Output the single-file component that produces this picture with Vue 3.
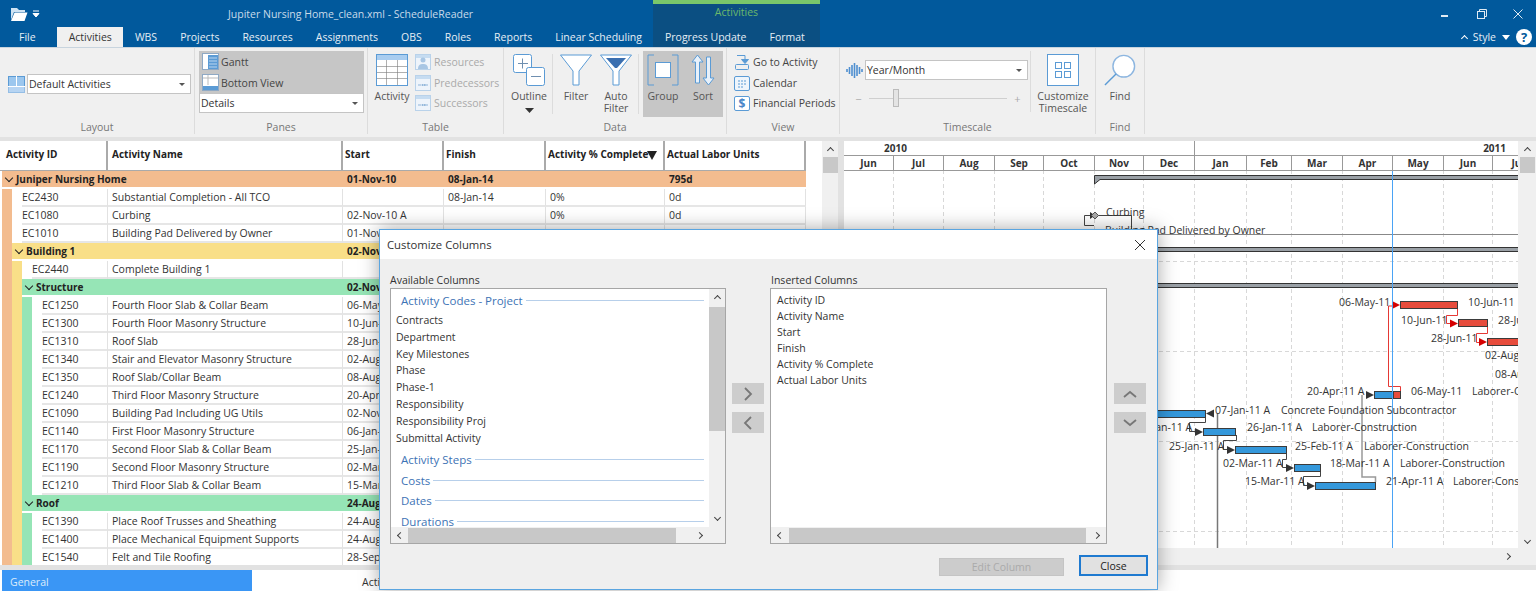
<template>
  <div class="app">
    <header class="titlebar">
      <div class="context"><span>Activities</span></div>
      <div class="title-row">
        <div class="quick">
          <svg width="18" height="16" viewBox="0 0 18 16"><path d="M1 2h6l2 2h6v2H4L1 14z" fill="#cfe3f3"/><path d="M4.500 6.500H17.500L14.500 15H1z" fill="#fff"/></svg>
          <svg class="quick-drop" width="8" height="8" viewBox="0 0 8 8"><path d="M1 1h6M1 3.500h6L4 7z" stroke="#fff" fill="#fff" stroke-width="1"/></svg>
        </div>
        <span class="title">Jupiter Nursing Home_clean.xml - ScheduleReader</span>
        <div class="win">
          <span class="win-min"></span>
          <svg width="12" height="12" viewBox="0 0 12 12" fill="none" stroke="#dfeaf3"><rect x="1.500" y="3.500" width="7" height="7"/><path d="M3.500 3.500v-2h7v7h-2"/></svg>
          <svg width="12" height="12" viewBox="0 0 12 12" stroke="#dfeaf3"><path d="M1.500 1.500l9 9M10.500 1.500l-9 9"/></svg>
        </div>
      </div>
      <nav class="tabs">
        <span v-for="t in tabs" :key="t" :class="['tab', { active: t === 'Activities', file: t === 'File' }]">{{ t }}</span>
        <div class="style-box">
          <span class="chev chev-up small"></span>
          <span>Style</span>
          <svg width="8" height="5" viewBox="0 0 8 5"><path d="M0 0h8L4 5z" fill="#fff"/></svg>
          <span class="help">?</span>
        </div>
      </nav>
    </header>

    <section class="ribbon">
      <div class="group" style="width: 195px">
        <div class="group-body layout-body">
          <svg width="17" height="17" viewBox="0 0 17 17"><rect x="0.500" y="0.500" width="16" height="16" fill="#9cc7ee" stroke="#5b9bd5"/><path d="M0 10.500h17M8.500 0v10.500" stroke="#fff"/><path d="M0 11h17v6H0z" fill="#cfe2f5" opacity=".5"/></svg>
          <div class="combo layout-combo"><span>Default Activities</span><i class="drop"></i></div>
        </div>
        <div class="group-label">Layout</div>
      </div>

      <div class="group" style="width: 173px">
        <div class="group-body panes-body">
          <div class="panes-on">
            <div class="pane-row">
              <svg width="17" height="17" viewBox="0 0 17 17"><rect x="0.500" y="0.500" width="16" height="16" fill="#fff" stroke="#8fa9c4"/><rect x="6" y="2" width="10" height="14" fill="#5b9bd5"/><path d="M7 5h8M7 8h8M7 11h8M7 14h8" stroke="#bcd6ef"/></svg>
              <span>Gantt</span>
            </div>
            <div class="pane-row">
              <svg width="17" height="17" viewBox="0 0 17 17"><rect x="0.500" y="0.500" width="16" height="16" fill="#fff" stroke="#8fa9c4"/><rect x="1" y="12" width="15" height="4" fill="#5b9bd5"/><path d="M6 1v10M1 4h15" stroke="#bbb"/></svg>
              <span>Bottom View</span>
            </div>
          </div>
          <div class="combo panes-combo"><span>Details</span><i class="drop"></i></div>
        </div>
        <div class="group-label">Panes</div>
      </div>

      <div class="group" style="width: 136px">
        <div class="group-body table-body">
          <div class="big" style="width: 38px">
            <svg width="32" height="32" viewBox="0 0 32 32"><rect x="0.500" y="0.500" width="31" height="31" fill="#fff" stroke="#5b9bd5"/><rect x="1" y="1" width="30" height="5" fill="#a9cdf0"/><path d="M1 12.500h30M1 18.500h30M1 24.500h30M10.500 6v25M21.500 6v25" stroke="#7b7b7b" stroke-opacity=".6"/></svg>
            <span>Activity</span>
          </div>
          <div class="small-list disabled">
            <div v-for="s in tableLinks" :key="s.name" class="small-row">
              <svg width="16" height="16" viewBox="0 0 16 16"><rect x="0.500" y="0.500" width="15" height="15" fill="#eef4fb" stroke="#b9d2ea"/><rect x="1" y="1" width="14" height="3" fill="#c6dcf1"/><circle v-if="s.person" cx="8" cy="6" r="2.500" fill="#a8c6e4"/><path v-if="s.person" d="M3 15c0-4 2-5 5-5s5 1 5 5z" fill="#a8c6e4"/><path v-if="!s.person" d="M3 10h3M10 10h3" stroke="#8fb4d9"/><circle v-if="!s.person" cx="7.500" cy="10" r="1" fill="#8fb4d9"/><circle v-if="!s.person" cx="9.500" cy="10" r="1" fill="#8fb4d9"/></svg>
              <span>{{ s.name }}</span>
            </div>
          </div>
        </div>
        <div class="group-label">Table</div>
      </div>

      <div class="group" style="width: 223px">
        <div class="group-body data-body">
          <div class="big outline-btn">
            <svg width="32" height="32" viewBox="0 0 32 32" fill="none" stroke="#5b9bd5"><rect x="0.500" y="0.500" width="18" height="18" rx="2" fill="#fff"/><rect x="13.500" y="13.500" width="18" height="18" rx="2" fill="#fff"/><path d="M5 9.500h10M9.500 4.500v10" stroke="#6f8fb0"/><path d="M18 22.500h10" stroke="#6f8fb0"/></svg>
            <span>Outline</span>
            <svg class="outline-arrow" width="9" height="5" viewBox="0 0 9 5"><path d="M0 0h9L4.500 5z" fill="#333"/></svg>
          </div>
          <div class="big" style="width: 40px">
            <svg width="32" height="32" viewBox="0 0 32 32"><path d="M0.500 1h31L19 17v14h-6V17z" fill="#fff" stroke="#5b9bd5"/></svg>
            <span>Filter</span>
          </div>
          <div class="big" style="width: 40px">
            <svg width="32" height="32" viewBox="0 0 32 32"><path d="M0.500 1h31L19 17v14h-6V17z" fill="#fff" stroke="#5b9bd5"/><path d="M6 4h20L17 14h-2z" fill="#3a6fb0"/></svg>
            <span>Auto<br>Filter</span>
          </div>
          <i class="vsep"></i>
          <div class="data-on">
            <div class="big" style="width: 40px">
              <svg width="32" height="32" viewBox="0 0 32 32" fill="none" stroke="#5b9bd5"><path d="M7 1H1v30h6M25 1h6v30h-6"/><rect x="8.500" y="8.500" width="15" height="15" fill="#fff"/></svg>
              <span>Group</span>
            </div>
            <div class="big" style="width: 40px">
              <svg width="24" height="32" viewBox="0 0 24 32" fill="#e8f1fa" stroke="#5b9bd5"><path d="M6.500 1L1 8h3.500v21h4V8H12z"/><path d="M17.500 31L12 24h3.500V3h4v21H23z"/></svg>
              <span>Sort</span>
            </div>
          </div>
        </div>
        <div class="group-label">Data</div>
      </div>

      <div class="group" style="width: 113px">
        <div class="group-body view-body">
          <div class="small-row">
            <svg width="16" height="16" viewBox="0 0 16 16" fill="none" stroke="#5b9bd5"><path d="M3 1.500h8v6"/><path d="M7.500 5.500l3.500 4 3.500-4z" fill="#5b9bd5"/><rect x="1.500" y="10.500" width="13" height="5" rx="1"/></svg>
            <span>Go to Activity</span>
          </div>
          <div class="small-row">
            <svg width="16" height="16" viewBox="0 0 16 16" fill="#eef5fc" stroke="#5b9bd5"><rect x="0.500" y="1.500" width="15" height="14" rx="1.500"/><path d="M4 6h2M7 6h2M10 6h2M4 9h2M7 9h2M10 9h2M4 12h2M7 12h2" stroke="#5b9bd5"/></svg>
            <span>Calendar</span>
          </div>
          <div class="small-row">
            <svg width="16" height="16" viewBox="0 0 16 16"><rect x="0.500" y="1.500" width="15" height="14" rx="1.500" fill="#fff" stroke="#5b9bd5"/><text x="8" y="13" text-anchor="middle" class="dollar">$</text></svg>
            <span>Financial Periods</span>
          </div>
        </div>
        <div class="group-label">View</div>
      </div>

      <div class="group" style="width: 256px">
        <div class="group-body time-body">
          <div class="time-left">
            <div class="time-row">
              <svg width="17" height="17" viewBox="0 0 17 17" stroke="#4f8fd0" stroke-width="1.600"><path d="M1 7v3M3.500 5v7M6 3v11M8.500 1v15M11 3v11M13.500 5v7M16 7v3"/></svg>
              <div class="combo time-combo"><span>Year/Month</span><i class="drop"></i></div>
            </div>
            <div class="slider">
              <span class="slide-sign">−</span>
              <div class="track"><i class="thumb"></i></div>
              <span class="slide-sign">+</span>
            </div>
          </div>
          <div class="big customize">
            <svg width="32" height="32" viewBox="0 0 32 32" fill="none" stroke="#5b9bd5"><rect x="0.500" y="0.500" width="31" height="31" fill="#fff"/><rect x="8.500" y="8.500" width="6" height="6"/><rect x="17.500" y="8.500" width="6" height="6"/><rect x="8.500" y="17.500" width="6" height="6"/><rect x="17.500" y="17.500" width="6" height="6"/></svg>
            <span>Customize<br>Timescale</span>
          </div>
        </div>
        <div class="group-label">Timescale</div>
      </div>

      <div class="group" style="width: 49px">
        <div class="group-body find-body">
          <div class="big" style="width: 48px">
            <svg width="34" height="34" viewBox="0 0 34 34" fill="none"><circle cx="21" cy="13" r="11.500" fill="#fff" stroke="#8db6e0" stroke-width="1.500"/><path d="M13 21L1 33" stroke="#5b9bd5" stroke-width="1.500"/></svg>
            <span>Find</span>
          </div>
        </div>
        <div class="group-label">Find</div>
      </div>
    </section>

    <main class="panes">
      <div class="grid-pane">
        <div class="grid">
          <div class="row head">
            <div v-for="h in columns" :key="h" class="cell">
              {{ h }}
              <svg v-if="h === 'Activity % Complete'" class="sort-mark" width="10" height="9" viewBox="0 0 10 9"><path d="M0 0h10L5 9z" fill="#222"/></svg>
            </div>
          </div>
          <div v-for="r in rows" :key="r.id || r.name" :class="['row', r.group ? `is-group group-${r.group}` : 'leaf']">
            <div :class="['cell', 'id-cell', { span2: r.group }]">
              <i v-for="(b, i) in r.bands" :key="i" :class="['band', `band-${b}`]"></i>
              <div v-if="r.group" class="group-fill">
                <span class="chev chev-down"></span>
                <span>{{ r.name }}</span>
              </div>
              <span v-else class="id-text">{{ r.id }}</span>
            </div>
            <div v-if="!r.group" class="cell">{{ r.name }}</div>
            <div class="cell">{{ r.start }}</div>
            <div class="cell">{{ r.finish }}</div>
            <div class="cell">{{ r.pct }}</div>
            <div class="cell">{{ r.labor }}</div>
          </div>
        </div>
        <div class="vscroll grid-scroll">
          <span class="chev chev-up"></span>
          <i class="vthumb"></i>
        </div>
      </div>

      <div class="gantt-pane">
        <div class="gantt-main">
          <div class="years">
            <div class="year year-left"><span>2010</span></div>
            <div class="year year-right"><span>2011</span></div>
          </div>
          <div class="months">
            <div v-for="(m, i) in months" :key="i" class="month" :style="{ width: m.w + 'px' }">{{ m.name }}</div>
          </div>
          <svg class="chart" width="674" height="377" viewBox="844 171 674 377">
            <g class="grid-lines">
              <path v-for="x in monthLines" :key="x" :d="`M${x + 0.5} 170V548`" />
              <path v-for="y in [261, 351, 441, 531]" :key="y" :d="`M844 ${y + 0.5}H1518`" />
            </g>
            <path d="M1094.500 175.500H1519V179.500H1100L1094.500 184Z" fill="#9aa0a6" stroke="#333"/>
            <rect x="1094.500" y="247.500" width="425" height="4" fill="#9aa0a6" stroke="#333"/>
            <rect x="1094.500" y="283.500" width="425" height="4" fill="#9aa0a6" stroke="#333"/>
            <path d="M1100 234.500H1518" stroke="#888"/>
            <path d="M1094 215.500H1084.500V225.500H1094M1094 215.500H1131.500V232" fill="none" stroke="#444"/>
            <path d="M1090 212l5 3.500-5 3.500z" fill="#333"/>
            <path d="M1095 212l3.500 3.500-3.500 3.500-3.500-3.500z" fill="#aaa" stroke="#555"/>

            <path d="M1217.500 413V548" stroke="#777" stroke-width="1.500"/>
            <path d="M1362 395V477H1375.500V482" fill="none" stroke="#999" stroke-width="1.500"/>
            <path v-for="(c, i) in blackLinks" :key="i" :d="c" fill="none" stroke="#444"/>
            <path v-for="(c, i) in redLinks" :key="'r' + i" :d="c" fill="none" stroke="#e53935"/>

            <rect v-for="(b, i) in bars" :key="'b' + i" :x="b.x + 0.5" :y="b.y + 0.5" :width="b.w" height="7" :fill="b.red ? '#e74c3c' : '#3498db'" stroke="#3b3b3b"/>
            <path v-for="(a, i) in arrows" :key="'a' + i" :d="a.d" :fill="a.red ? '#d50000' : '#333'"/>
            <path d="M1392.500 170V548" stroke="#4aa3f5"/>
            <text v-for="(l, i) in labels" :key="'t' + i" :x="l[0]" :y="l[1]" class="bar-label">{{ l[2] }}</text>
          </svg>
          <div class="hscroll gantt-h"><span class="chev chev-right"></span></div>
        </div>
        <div class="vscroll gantt-scroll">
          <span class="chev chev-up"></span>
          <i class="vthumb"></i>
          <span class="chev chev-down scroll-end"></span>
        </div>
      </div>
    </main>

    <footer class="bottom">
      <div class="bottom-tab">General</div>
      <div class="bottom-text">Activity Details</div>
    </footer>

    <div class="dialog">
      <div class="dlg-title">
        <span>Customize Columns</span>
        <svg width="12" height="12" viewBox="0 0 12 12" stroke="#333"><path d="M1 1l10 10M11 1L1 11"/></svg>
      </div>
      <div class="dlg-body">
        <div class="dlg-cols">
          <div class="col-left">
            <div class="col-label">Available Columns</div>
            <div class="listbox avail">
              <div class="list-content">
                <template v-for="s in available" :key="s.title">
                  <div :class="['sect', { 'sect-first': s.items.length }]"><span>{{ s.title }}</span><i></i></div>
                  <div v-for="it in s.items" :key="it" class="avail-item">{{ it }}</div>
                </template>
              </div>
              <div class="list-v">
                <span class="chev chev-up"></span>
                <i class="list-thumb"></i>
                <span class="chev chev-down list-down"></span>
              </div>
              <div class="list-h">
                <span class="chev chev-left"></span>
                <i class="h-thumb"></i>
                <span class="chev chev-right"></span>
              </div>
              <div class="corner"></div>
            </div>
          </div>
          <div class="move-btns">
            <button class="sq"><svg width="14" height="14" viewBox="0 0 14 14" class="sq-icon"><path d="M4 1l6 6-6 6"/></svg></button>
            <button class="sq"><svg width="14" height="14" viewBox="0 0 14 14" class="sq-icon"><path d="M10 1L4 7l6 6"/></svg></button>
          </div>
          <div class="col-right">
            <div class="col-label ins-label">Inserted Columns</div>
            <div class="listbox inserted">
              <div class="list-content ins-content">
                <div v-for="c in columns" :key="c" class="ins-item">{{ c }}</div>
              </div>
              <div class="list-h ins-h">
                <span class="chev chev-left"></span>
                <i class="h-thumb"></i>
                <span class="chev chev-right"></span>
              </div>
            </div>
          </div>
          <div class="move-btns order">
            <button class="sq"><svg width="14" height="14" viewBox="0 0 14 14" class="sq-icon"><path d="M1 10l6-5 6 5"/></svg></button>
            <button class="sq"><svg width="14" height="14" viewBox="0 0 14 14" class="sq-icon"><path d="M1 4l6 5 6-5"/></svg></button>
          </div>
        </div>
        <div class="dlg-foot">
          <button class="btn-edit">Edit Column</button>
          <button class="btn-close">Close</button>
        </div>
      </div>
    </div>
  </div>
</template>

<script setup>
const tabs = ['File', 'Activities', 'WBS', 'Projects', 'Resources', 'Assignments', 'OBS', 'Roles', 'Reports', 'Linear Scheduling', 'Progress Update', 'Format']

const tableLinks = [
  { name: 'Resources', person: true },
  { name: 'Predecessors' },
  { name: 'Successors' }
]

const columns = ['Activity ID', 'Activity Name', 'Start', 'Finish', 'Activity % Complete', 'Actual Labor Units']

const leaf1 = ['o']
const leaf2 = ['o', 'y']
const leaf3 = ['o', 'y', 'g']

const rows = [
  { group: 'o', bands: [], name: 'Juniper Nursing Home', start: '01-Nov-10', finish: '08-Jan-14', labor: '795d' },
  { id: 'EC2430', bands: leaf1, name: 'Substantial Completion - All TCO', finish: '08-Jan-14', pct: '0%', labor: '0d' },
  { id: 'EC1080', bands: leaf1, name: 'Curbing', start: '02-Nov-10 A', pct: '0%', labor: '0d' },
  { id: 'EC1010', bands: leaf1, name: 'Building Pad Delivered by Owner', start: '01-Nov-10' },
  { group: 'y', bands: leaf1, name: 'Building 1', start: '02-Nov-10' },
  { id: 'EC2440', bands: leaf2, name: 'Complete Building 1' },
  { group: 'g', bands: leaf2, name: 'Structure', start: '02-Nov-10' },
  { id: 'EC1250', bands: leaf3, name: 'Fourth Floor Slab & Collar Beam', start: '06-May-11' },
  { id: 'EC1300', bands: leaf3, name: 'Fourth Floor Masonry Structure', start: '10-Jun-11' },
  { id: 'EC1310', bands: leaf3, name: 'Roof Slab', start: '28-Jun-11' },
  { id: 'EC1340', bands: leaf3, name: 'Stair and Elevator Masonry Structure', start: '02-Aug-11' },
  { id: 'EC1350', bands: leaf3, name: 'Roof Slab/Collar Beam', start: '08-Aug-11' },
  { id: 'EC1240', bands: leaf3, name: 'Third Floor Masonry Structure', start: '20-Apr-11 A' },
  { id: 'EC1090', bands: leaf3, name: 'Building Pad Including UG Utils', start: '02-Nov-10 A' },
  { id: 'EC1140', bands: leaf3, name: 'First Floor Masonry Structure', start: '06-Jan-11 A' },
  { id: 'EC1170', bands: leaf3, name: 'Second Floor Slab & Collar Beam', start: '25-Jan-11 A' },
  { id: 'EC1190', bands: leaf3, name: 'Second Floor Masonry Structure', start: '02-Mar-11 A' },
  { id: 'EC1210', bands: leaf3, name: 'Third Floor Slab & Collar Beam', start: '15-Mar-11 A' },
  { group: 'g', bands: leaf2, name: 'Roof', start: '24-Aug-11' },
  { id: 'EC1390', bands: leaf3, name: 'Place Roof Trusses and Sheathing', start: '24-Aug-11' },
  { id: 'EC1400', bands: leaf3, name: 'Place Mechanical Equipment Supports', start: '24-Aug-11' },
  { id: 'EC1540', bands: leaf3, name: 'Felt and Tile Roofing', start: '28-Sep-11' }
]

const months = [
  { name: 'Jun', w: 50 }, { name: 'Jul', w: 50 }, { name: 'Aug', w: 51 }, { name: 'Sep', w: 49 },
  { name: 'Oct', w: 51 }, { name: 'Nov', w: 49 }, { name: 'Dec', w: 51 }, { name: 'Jan', w: 52 },
  { name: 'Feb', w: 45 }, { name: 'Mar', w: 51 }, { name: 'Apr', w: 50 }, { name: 'May', w: 51 },
  { name: 'Jun', w: 49 }, { name: 'Jul', w: 50 }
]

const monthLines = [893, 943, 994, 1043, 1094, 1143, 1194, 1246, 1291, 1342, 1392, 1443, 1492]

const bars = [
  { x: 1400, y: 301, w: 57, red: true },
  { x: 1458, y: 319, w: 29, red: true },
  { x: 1487, y: 338, w: 32, red: true },
  { x: 1374, y: 391, w: 18 },
  { x: 1393, y: 391, w: 7, red: true },
  { x: 1150, y: 410, w: 55 },
  { x: 1203, y: 428, w: 32 },
  { x: 1235, y: 446, w: 51 },
  { x: 1294, y: 464, w: 26 },
  { x: 1315, y: 482, w: 60 }
]

const arrows = [
  { d: 'M1392 301l8 4-8 4z', red: true },
  { d: 'M1450 319.500l8 4-8 4z', red: true },
  { d: 'M1479 338l8 4-8 4z', red: true },
  { d: 'M1366 391l8 4-8 4z' },
  { d: 'M1214 409.500l-8 4 8 4z' },
  { d: 'M1195 428l8 4-8 4z' },
  { d: 'M1227 446l8 4-8 4z' },
  { d: 'M1286 464l8 4-8 4z' },
  { d: 'M1307 482l8 4-8 4z' }
]

const blackLinks = [
  'M1205.500 417V422.500H1189.500V431.500H1196',
  'M1236.500 435V440.500H1223.500V449.500H1228',
  'M1286.500 453V459.500H1282.500V467.500H1287',
  'M1320.500 471V476.500H1303.500V485.500H1308'
]

const redLinks = [
  'M1388.500 306H1392M1388.500 306V386.500H1400.500V393',
  'M1457.500 309V315.500H1446.500V323.500H1450',
  'M1487.500 327V333.500H1476.500V342.500H1480'
]

const labels = [
  [1106, 216, 'Curbing'],
  [1105, 234, 'Building Pad Delivered by Owner'],
  [1339, 306, '06-May-11'], [1468, 306, '10-Jun-11'],
  [1401, 324, '10-Jun-11'], [1498, 324, '28-Jun-11'],
  [1431, 342, '28-Jun-11'],
  [1485, 359, '02-Aug-11'],
  [1495, 378, '08-Aug-11'],
  [1307, 395, '20-Apr-11 A'], [1411, 395, '06-May-11'], [1472, 395, 'Laborer-Construction'],
  [1215, 414, '07-Jan-11 A'], [1281, 414, 'Concrete Foundation Subcontractor'],
  [1137, 431, '06-Jan-11 A'], [1247, 431, '26-Jan-11 A'], [1312, 431, 'Laborer-Construction'],
  [1169, 450, '25-Jan-11 A'], [1295, 450, '25-Feb-11 A'], [1364, 450, 'Laborer-Construction'],
  [1223, 467, '02-Mar-11 A'], [1330, 467, '18-Mar-11 A'], [1400, 467, 'Laborer-Construction'],
  [1245, 485, '15-Mar-11 A'], [1386, 485, '21-Apr-11 A'], [1453, 485, 'Laborer-Construction']
]

const available = [
  {
    title: 'Activity Codes - Project',
    items: ['Contracts', 'Department', 'Key Milestones', 'Phase', 'Phase-1', 'Responsibility', 'Responsibility Proj', 'Submittal Activity']
  },
  { title: 'Activity Steps', items: [] },
  { title: 'Costs', items: [] },
  { title: 'Dates', items: [] },
  { title: 'Durations', items: [] }
]
</script>

<style>
html, body {
  margin: 0;
  overflow: hidden;
}
</style>

<style scoped>
.app {
  position: relative;
  width: 1536px;
  height: 591px;
  overflow: hidden;
  background: #f0f0f0;
  font-family: "Open Sans", "Noto Sans", sans-serif;
  font-size: 10.5px;
  color: #333;
}

/* title bar */
.titlebar {
  position: relative;
  height: 47px;
  background: #01599c;
  color: #e6eef5;
}
.context {
  position: absolute;
  left: 653px;
  top: 0;
  width: 167px;
  height: 47px;
  box-sizing: border-box;
  background: #0b4f82;
  border-top: 4px solid #7ac76a;
  text-align: center;
  color: #6cb86c;
  line-height: 16px;
}
.title-row {
  position: relative;
  height: 27px;
  display: flex;
  align-items: center;
}
.quick {
  width: 228px;
  padding-left: 10px;
  box-sizing: border-box;
  display: flex;
  align-items: center;
  gap: 4px;
}
.title {
  color: #c9dbea;
  font-size: 10.5px;
}
.win {
  margin-left: auto;
  margin-right: 12px;
  display: flex;
  align-items: center;
  gap: 24px;
}
.win-min {
  width: 7px;
  height: 2px;
  background: #dfeaf3;
  margin-top: 5px;
  margin-right: 4px;
}
.tabs {
  position: relative;
  height: 20px;
  display: flex;
  padding-left: 7.500px;
}
.tab {
  padding: 0 11.500px;
  line-height: 20px;
  white-space: nowrap;
}
.tab.file {
  margin-right: 10px;
}
.tab.active {
  background: #f0f0f0;
  color: #333;
}
.style-box {
  margin-left: auto;
  margin-right: 4px;
  display: flex;
  align-items: center;
  gap: 6px;
}
.help {
  width: 16px;
  height: 16px;
  border-radius: 50%;
  background: #fff;
  color: #01599c;
  font-weight: 700;
  font-size: 13px;
  line-height: 16px;
  text-align: center;
}

/* shared chevrons drawn with two borders */
.chev {
  display: inline-block;
  width: 5px;
  height: 5px;
  border-top: 1.5px solid #444;
  border-left: 1.5px solid #444;
  box-sizing: border-box;
}
.chev-up { transform: rotate(45deg); }
.chev-down { transform: rotate(225deg); }
.chev-left { transform: rotate(-45deg); }
.chev-right { transform: rotate(135deg); }
.small {
  border-color: #fff;
  margin-top: 3px;
}

/* ribbon */
.ribbon {
  height: 90px;
  display: flex;
  box-sizing: border-box;
  border-top: 1px solid #c8d4de;
  background: #f0f0f0;
}
.group {
  display: flex;
  flex-direction: column;
  box-sizing: border-box;
  border-right: 1px solid #dcdcdc;
  margin-bottom: 3px;
  flex: none;
}
.group-body {
  height: 69px;
  padding-top: 3px;
  display: flex;
}
.group-label {
  text-align: center;
  color: #777;
  line-height: 14px;
  margin-top: 1px;
}
.combo {
  display: flex;
  align-items: center;
  justify-content: space-between;
  box-sizing: border-box;
  background: #fff;
  border: 1px solid #c4c4c4;
  padding: 0 5px 0 1px;
}
.drop {
  width: 0;
  height: 0;
  border-left: 3px solid transparent;
  border-right: 3px solid transparent;
  border-top: 3px solid #555;
}
.layout-body {
  align-items: center;
  padding-left: 8px;
  gap: 2px;
  height: 67px;
  padding-bottom: 2px;
}
.layout-combo {
  width: 164px;
  height: 20px;
}
.panes-body {
  flex-direction: column;
  padding-left: 4px;
}
.panes-on {
  width: 165px;
  height: 42px;
  background: #c6c6c6;
  padding: 0 0 0 3px;
  box-sizing: border-box;
}
.pane-row {
  height: 21px;
  display: flex;
  align-items: center;
  gap: 2px;
  color: #444;
}
.panes-combo {
  width: 165px;
  height: 20px;
}
.big {
  display: flex;
  flex-direction: column;
  align-items: center;
  text-align: center;
  line-height: 12px;
  color: #555;
  flex: none;
  margin-top: 3px;
}
.big > svg:first-child {
  height: 32px;
  margin-bottom: 4px;
}
.table-body {
  padding-left: 5px;
}
.small-list {
  margin-left: 4px;
  padding-top: 1px;
}
.small-row {
  height: 20.5px;
  display: flex;
  align-items: center;
  gap: 3px;
  white-space: nowrap;
  color: #444;
}
.disabled .small-row {
  color: #aaa;
}
.data-body {
  padding-left: 2px;
}
.outline-btn {
  width: 46px;
  border-right: 1px solid #dcdcdc;
  height: 60px;
  margin-right: 3px;
}
.outline-arrow {
  margin-top: 6px;
}
.vsep {
  width: 1px;
  height: 60px;
  background: #dcdcdc;
  margin: 3px 4px 0 2px;
}
.data-on {
  display: flex;
  background: #c6c6c6;
  height: 66px;
  width: 80px;
}
.dollar {
  font-size: 12px;
  font-weight: 700;
  fill: #4a86c8;
}
.view-body {
  flex-direction: column;
  padding-left: 7px;
  padding-top: 4px;
  height: 68px;
}
.time-body {
  padding-left: 6px;
}
.time-left {
  width: 184px;
  padding-top: 9px;
  border-right: 1px solid #dcdcdc;
  height: 52px;
}
.time-row {
  display: flex;
  align-items: center;
  gap: 2px;
}
.time-combo {
  width: 163px;
  height: 20px;
}
.slider {
  display: flex;
  align-items: center;
  margin-top: 9px;
  height: 18px;
  color: #aaa;
  padding-left: 4px;
  width: 176px;
}
.slide-sign {
  width: 17px;
  font-size: 11px;
  text-align: center;
}
.track {
  position: relative;
  width: 138px;
  height: 1px;
  background: #cfcfcf;
  margin: 0 2px;
}
.thumb {
  position: absolute;
  left: 24px;
  top: -9px;
  width: 6px;
  height: 18px;
  box-sizing: border-box;
  background: #e4e4e4;
  border: 1px solid #bbb;
}
.customize {
  width: 64px;
}

/* grid + gantt */
.panes {
  height: 433px;
  display: flex;
  background: #e2e2e2;
  padding-top: 4px;
  padding-bottom: 5px;
  box-sizing: border-box;
}
.grid-pane {
  width: 838px;
  display: flex;
  background: #fff;
}
.grid {
  width: 822px;
  overflow: hidden;
}
.row {
  display: grid;
  grid-template-columns: 108px 235px 101px 102px 119px 141px;
  width: 806px;
  height: 18px;
  box-sizing: border-box;
}
.cell {
  display: flex;
  align-items: center;
  white-space: nowrap;
  padding-left: 4px;
  box-sizing: border-box;
  border-right: 1px solid #e2e2e2;
  border-bottom: 2px solid #e6e6e6;
  min-width: 0;
}
.head {
  height: 30px;
  font-weight: 700;
  font-size: 10px;
  color: #222;
}
.head .cell {
  padding-left: 4px;
  padding-bottom: 4px;
  border-right: 2px solid #aaa;
  border-bottom: 1px solid #aaa;
  position: relative;
  background: #fff;
}
.head .cell:first-child {
  padding-left: 6px;
}
.head .cell:nth-child(n+3) {
  padding-left: 2px;
}
.sort-mark {
  position: absolute;
  right: 6px;
  top: 10px;
}
.id-cell {
  padding-left: 2px;
  align-items: stretch;
  border-bottom: none;
}
.band {
  width: 10px;
  flex: none;
  height: 18px;
}
.band-o { background: #f3bc8f; }
.band-y { background: #f9df88; }
.band-g { background: #96e5b6; }
.id-text {
  margin-left: 10px;
  line-height: 16px;
  border-bottom: 2px solid #e6e6e6;
  flex: 1;
}
.is-group {
  font-weight: 700;
  font-size: 10px;
  color: #222;
}
.is-group .cell {
  border-right: none;
  border-bottom: none;
  height: 16px;
}
.is-group .id-cell {
  height: 18px;
  grid-column: span 2;
}
.group-fill {
  flex: 1;
  height: 16px;
  display: flex;
  align-items: center;
  padding-left: 4px;
  gap: 4px;
}
.group-fill .chev {
  width: 6px;
  height: 6px;
  border-color: #222;
  margin-bottom: 3px;
}
.group-o .cell:not(.id-cell), .group-o .group-fill { background: #f3bc8f; }
.group-y .cell:not(.id-cell), .group-y .group-fill { background: #f9df88; }
.group-g .cell:not(.id-cell), .group-g .group-fill { background: #96e5b6; }

.vscroll {
  width: 16px;
  background: #f0f0f0;
  display: flex;
  flex-direction: column;
  align-items: center;
  flex: none;
}
.vscroll .chev {
  margin-top: 7px;
}
.vthumb {
  width: 15px;
  height: 16px;
  background: #c8c8c8;
  margin-top: 4px;
}
.gantt-pane {
  flex: 1;
  display: flex;
  margin-left: 6px;
  background: #fff;
  min-width: 0;
}
.gantt-main {
  width: 674px;
  flex: none;
}
.years {
  height: 14px;
  display: flex;
  font-weight: 700;
  font-size: 10px;
  line-height: 14px;
  background: #fff;
}
.year {
  box-sizing: border-box;
  white-space: nowrap;
}
.year-left {
  width: 351px;
  border-right: 1px solid #999;
  padding-left: 40px;
}
.year-right {
  flex: 1;
  text-align: right;
  padding-right: 12px;
}
.months {
  display: flex;
  height: 14px;
  border-top: 1px solid #999;
  border-bottom: 1px solid #999;
  overflow: hidden;
}
.month {
  flex: none;
  box-sizing: border-box;
  border-right: 1px solid #999;
  text-align: center;
  font-weight: 700;
  font-size: 10px;
  line-height: 14px;
  white-space: nowrap;
}
.month:last-child {
  border-right: none;
}
.chart {
  display: block;
  background: #fff;
}
.grid-lines path {
  stroke: #d8d8d8;
  stroke-dasharray: 4 3;
  fill: none;
}
.bar-label {
  font-size: 10.5px;
  fill: #333;
}
.hscroll {
  height: 17px;
  background: #f0f0f0;
  display: flex;
  align-items: center;
  justify-content: flex-end;
  padding-right: 8px;
}
.gantt-scroll {
  width: 18px;
}
.gantt-scroll .scroll-end {
  margin-top: auto;
  margin-bottom: 22px;
}
.bottom {
  height: 21px;
  display: flex;
  background: #fff;
  padding-left: 2px;
}
.bottom-tab {
  width: 250px;
  background: #3a96f5;
  color: #dcecfb;
  padding-left: 8px;
  box-sizing: border-box;
  line-height: 24px;
}
.bottom-text {
  margin-left: 110px;
  line-height: 24px;
}

/* dialog */
.dialog {
  position: absolute;
  left: 379px;
  top: 229px;
  width: 779px;
  height: 361px;
  box-sizing: border-box;
  border: 1px solid #5aa5e0;
  background: #efefef;
  box-shadow: 0 0 18px rgba(0, 0, 0, 0.35);
  display: flex;
  flex-direction: column;
}
.dlg-title {
  height: 29px;
  background: #fff;
  display: flex;
  align-items: center;
  justify-content: space-between;
  padding: 0 11px 0 7px;
  font-size: 11.3px;
  flex: none;
}
.dlg-body {
  padding: 13px 9px 0 10px;
  flex: 1;
}
.dlg-cols {
  display: flex;
}
.col-label {
  line-height: 16px;
  height: 16px;
}
.ins-label {
  padding-left: 1px;
}
.listbox {
  box-sizing: border-box;
  border: 1px solid #a6a6a6;
  background: #fff;
  height: 256px;
  display: grid;
}
.avail {
  width: 336px;
  grid-template-columns: 1fr 16px;
  grid-template-rows: 238px 1fr;
}
.inserted {
  width: 337px;
  grid-template-rows: 238px 1fr;
}
.list-content {
  overflow: hidden;
  padding: 1px 5px 0 5px;
  min-width: 0;
}
.ins-content {
  padding: 3px 6px 0;
}
.sect {
  display: flex;
  align-items: center;
  gap: 3px;
  height: 20.8px;
  padding-left: 5px;
  color: #3d73b5;
  font-size: 11.5px;
  white-space: nowrap;
}
.sect i {
  flex: 1;
  height: 1px;
  background: #b7cfea;
}
.sect-first {
  margin-bottom: 1px;
}
.avail-item + .sect {
  margin-top: 2px;
}
.avail-item {
  height: 16.9px;
  line-height: 16.9px;
  white-space: nowrap;
}
.ins-item {
  height: 16px;
  line-height: 16px;
  white-space: nowrap;
}
.list-v {
  background: #f0f0f0;
  display: flex;
  flex-direction: column;
  align-items: center;
}
.list-v .chev {
  margin-top: 7px;
}
.list-thumb {
  width: 16px;
  height: 124px;
  background: #c8c8c8;
  margin-top: 6px;
}
.list-v .list-down {
  margin-top: auto;
  margin-bottom: 7px;
}
.list-h {
  background: #f0f0f0;
  display: flex;
  align-items: center;
  padding: 0 7px;
}
.h-thumb {
  flex: 1;
  height: 15px;
  background: #c8c8c8;
  margin: 0 21px 0 5px;
}
.corner {
  background: #f0f0f0;
}
.ins-h .h-thumb {
  margin: 0 8px 0 6px;
}
.move-btns {
  width: 32px;
  margin: 111px 6px 0 6px;
  display: flex;
  flex-direction: column;
  gap: 8px;
  flex: none;
}
.order {
  margin-left: 7px;
  margin-right: 0;
}
.sq {
  width: 32px;
  height: 21px;
  border: none;
  padding: 0;
  background: #cdcdcd;
  display: flex;
  align-items: center;
  justify-content: center;
}
.sq-icon {
  fill: none;
  stroke: #777;
  stroke-width: 1.8;
}
.dlg-foot {
  display: flex;
  justify-content: flex-end;
  align-items: flex-end;
  gap: 15px;
  margin-top: 11px;
}
.btn-edit {
  width: 125px;
  height: 18px;
  border: 1px solid #c4c4c4;
  background: #cccccc;
  color: #aaa;
  font: inherit;
  padding: 0;
}
.btn-close {
  width: 69px;
  height: 21px;
  border: 2px solid #1f7ad0;
  background: #e1e1e1;
  color: #222;
  font: inherit;
  padding: 0;
}
</style>
